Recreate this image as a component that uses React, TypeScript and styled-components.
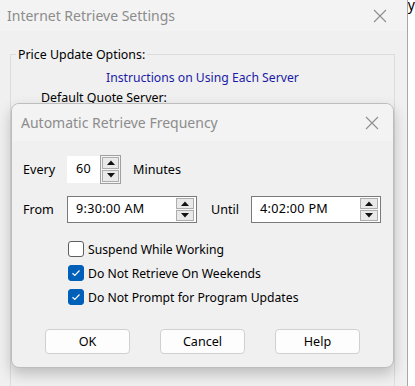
import * as React from 'react'
import styled, { createGlobalStyle } from 'styled-components'

const GlobalStyle = createGlobalStyle`
  html, body {
    margin: 0;
    padding: 0;
    background: #ffffff;
  }
  body {
    font-family: 'Noto Sans', 'Open Sans', sans-serif;
    font-size: 12px;
    color: #000;
  }
`

const Screen = styled.div`
  display: flex;
  width: 415px;
  height: 386px;
  overflow: hidden;
`

/* Outer window behind the dialog */
const OuterWindow = styled.div`
  position: relative;
  width: 408px;
  height: 386px;
  background: #f0f0f0;
  border-right: 1px solid #a8a8a8;
  display: flex;
  flex-direction: column;
`

const Strip = styled.div`
  flex: 1;
  background: #ffffff;
  font-size: 14px;
  line-height: 9px;
`

const TitleBar = styled.div<{ $light?: boolean }>`
  display: flex;
  align-items: center;
  justify-content: space-between;
  height: ${p => (p.$light ? '37px' : '31px')};
  padding: 0 ${p => (p.$light ? '14px' : '20px')} 0 ${p => (p.$light ? '9px' : '7px')};
  background: #f3f3f3;
  flex-shrink: 0;
`

const Title = styled.span`
  font-size: 14px;
  color: #8c8c8c;
`

const CloseIcon = () => (
  <svg width="14" height="14" viewBox="0 0 14 14">
    <path d="M1 1 L13 13 M13 1 L1 13" stroke="#8e8e8e" strokeWidth="1.1" fill="none" />
  </svg>
)

const OuterBody = styled.div`
  flex: 1;
  padding: 15px 12px 0 10px;
`

const GroupBox = styled.fieldset`
  margin: 0;
  height: 360px;
  border: 1px solid #dcdcdc;
  border-bottom: none;
  padding: 0;
  box-sizing: border-box;

  legend {
    padding: 0 2px;
    margin-left: 5px;
    font-size: 12.4px;
  }
`

const LinkText = styled.div`
  color: #1a1aa6;
  padding-left: 95px;
  margin-top: 6px;
  font-size: 12.2px;
`

const SubLabel = styled.div`
  margin-top: 3px;
  padding-left: 30px;
  font-size: 12.4px;
`

/* Modal dialog floating over the window */
const Dialog = styled.div`
  position: absolute;
  left: 11px;
  top: 103px;
  width: 383px;
  height: 265px;
  box-sizing: border-box;
  border: 1px solid #bdbdbd;
  border-radius: 8px;
  background: #f0f0f0;
  box-shadow: 0 6px 14px rgba(0, 0, 0, 0.22);
  overflow: hidden;
  display: flex;
  flex-direction: column;
`

const DialogBody = styled.div`
  padding: 14px 0 0 11px;
  display: flex;
  flex-direction: column;
  font-size: 12.2px;
`

const Row = styled.div<{ $gap?: number }>`
  display: flex;
  align-items: center;
  height: 28px;
  margin-bottom: ${p => p.$gap ?? 0}px;
`

const Label = styled.span<{ $w: number; $ml?: number }>`
  width: ${p => p.$w}px;
  margin-left: ${p => p.$ml ?? 0}px;
  flex-shrink: 0;
  font-size: 12.6px;
`

const Field = styled.div<{ $w: number; $bare?: boolean }>`
  display: flex;
  align-items: center;
  width: ${p => p.$w}px;
  height: 27px;
  box-sizing: border-box;
  background: #ffffff;
  border: 1px solid ${p => (p.$bare ? '#ffffff' : '#7a7a7a')};
  padding-left: 8px;
  padding-right: 2px;
  font-size: 12.6px;
  letter-spacing: 0.3px;
`

const FieldText = styled.span`
  flex: 1;
  align-self: flex-start;
  padding-top: 3px;
`

const SpinGroup = styled.div<{ $outer?: boolean }>`
  display: flex;
  flex-direction: column;
  gap: 1px;
  padding: ${p => (p.$outer ? '1px' : '0')};
  border: ${p => (p.$outer ? '1px solid #a0a0a0' : 'none')};
  background: #f4f4f4;
`

const SpinButton = styled.div<{ $h: number; $w: number }>`
  width: ${p => p.$w}px;
  height: ${p => p.$h}px;
  box-sizing: border-box;
  border: 1px solid #adadad;
  background: #e9e9e9;
  display: flex;
  align-items: center;
  justify-content: center;
`

const Arrow = ({ up }: { up?: boolean }) => (
  <svg width="8" height="5" viewBox="0 0 8 5">
    <path d={up ? 'M0 5 L4 0.5 L8 5 Z' : 'M0 0 L4 4.5 L8 0 Z'} fill="#111" />
  </svg>
)

const Spinner = ({ outer, w, h }: { outer?: boolean; w: number; h: number }) => (
  <SpinGroup $outer={outer}>
    <SpinButton $w={w} $h={h}>
      <Arrow up />
    </SpinButton>
    <SpinButton $w={w} $h={h}>
      <Arrow />
    </SpinButton>
  </SpinGroup>
)

const Checks = styled.div`
  display: flex;
  flex-direction: column;
  gap: 8px;
  padding-left: 45px;
  margin-top: 18px;
`

const CheckRow = styled.label`
  display: flex;
  align-items: center;
  gap: 4px;
  height: 16px;
`

const Box = styled.span<{ $on?: boolean }>`
  width: 16px;
  height: 16px;
  box-sizing: border-box;
  border-radius: 3px;
  border: 1px solid ${p => (p.$on ? '#005fb8' : '#5e5e5e')};
  background: ${p => (p.$on ? '#005fb8' : '#ffffff')};
  display: flex;
  align-items: center;
  justify-content: center;
`

const Check = ({ on, children }: { on?: boolean; children: React.ReactNode }) => (
  <CheckRow>
    <Box $on={on}>
      {on && (
        <svg width="10" height="8" viewBox="0 0 10 8">
          <path d="M1.5 4.2 L3.8 6.4 L8.5 1.5" stroke="#fff" strokeWidth="1.2" fill="none" />
        </svg>
      )}
    </Box>
    {children}
  </CheckRow>
)

const Buttons = styled.div`
  display: flex;
  gap: 30px;
  padding-left: 22px;
  margin-top: 24px;
`

const Button = styled.div`
  width: 85px;
  height: 25px;
  box-sizing: border-box;
  background: #fdfdfd;
  border: 1px solid #d0d0d0;
  border-radius: 4px;
  display: flex;
  align-items: center;
  justify-content: center;
  font-size: 12.6px;
`

const App = () => (
  <>
    <GlobalStyle />
    <Screen>
      <OuterWindow>
        <TitleBar>
          <Title>Internet Retrieve Settings</Title>
          <CloseIcon />
        </TitleBar>
        <OuterBody>
          <GroupBox>
            <legend>Price Update Options:</legend>
            <LinkText>Instructions on Using Each Server</LinkText>
            <SubLabel>Default Quote Server:</SubLabel>
          </GroupBox>
        </OuterBody>

        <Dialog>
          <TitleBar $light>
            <Title>Automatic Retrieve Frequency</Title>
            <CloseIcon />
          </TitleBar>
          <DialogBody>
            <Row $gap={12}>
              <Label $w={44}>Every</Label>
              <Field $w={33} $bare>
                <FieldText>60</FieldText>
              </Field>
              <Spinner outer w={17} h={12} />
              <Label $w={60} $ml={12}>Minutes</Label>
            </Row>
            <Row>
              <Label $w={44}>From</Label>
              <Field $w={130}>
                <FieldText>9:30:00 AM</FieldText>
                <Spinner w={18} h={11} />
              </Field>
              <Label $w={40} $ml={14}>Until</Label>
              <Field $w={130}>
                <FieldText>4:02:00 PM</FieldText>
                <Spinner w={18} h={11} />
              </Field>
            </Row>
            <Checks>
              <Check>Suspend While Working</Check>
              <Check on>Do Not Retrieve On Weekends</Check>
              <Check on>Do Not Prompt for Program Updates</Check>
            </Checks>
            <Buttons>
              <Button>OK</Button>
              <Button>Cancel</Button>
              <Button>Help</Button>
            </Buttons>
          </DialogBody>
        </Dialog>
      </OuterWindow>
      <Strip>y</Strip>
    </Screen>
  </>
)

export default App
